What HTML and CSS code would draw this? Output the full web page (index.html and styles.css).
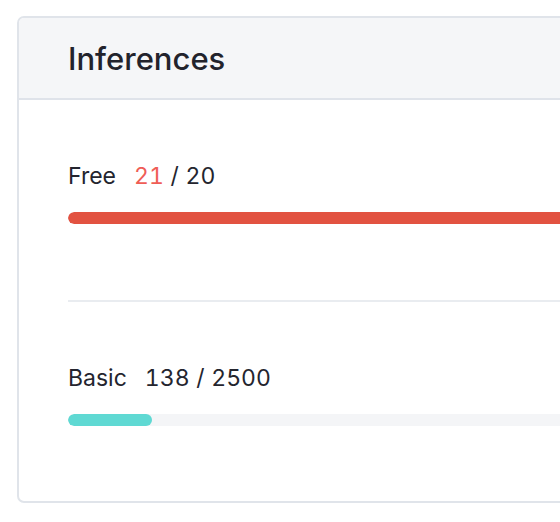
FILE: index.html
```html
<!DOCTYPE html>
<html lang="en">
<head>
<meta charset="utf-8">
<title>Inferences</title>
<link rel="stylesheet" href="styles.css">
</head>
<body>
<div class="card">
  <div class="card-header">
    <h2 class="card-title">Inferences</h2>
  </div>
  <div class="usage">
    <div class="usage-label">
      <span class="plan">Free</span>
      <span class="count"><span class="over">21</span> / 20</span>
    </div>
    <div class="track"><div class="fill fill-over" style="width: 100%"></div></div>
  </div>
  <div class="divider"></div>
  <div class="usage usage-last">
    <div class="usage-label">
      <span class="plan">Basic</span>
      <span class="count">138 / 2500</span>
    </div>
    <div class="track"><div class="fill fill-ok" style="width: 5.52%"></div></div>
  </div>
</div>
</body>
</html>
```

FILE: styles.css
```css
html, body {
  margin: 0;
  padding: 0;
  overflow: hidden;
  background: #ffffff;
}

body {
  font-family: Inter, "Noto Sans", sans-serif;
  color: #24252e;
  padding: 16px 0 0 17px;
}

.card {
  box-sizing: border-box;
  width: 1624px;
  border: 2px solid #e0e4ea;
  border-radius: 7px;
  background: #ffffff;
  overflow: hidden;
}

.card-header {
  height: 80px;
  display: flex;
  align-items: center;
  padding: 0 49px;
  background: #f5f6f8;
  border-bottom: 2px solid #dfe3ea;
}

.card-title {
  margin: 0;
  font-size: 31px;
  font-weight: 500;
  line-height: 1;
  color: #22232c;
}

.usage {
  padding: 60px 49px 76px;
}

.usage-last {
  padding-bottom: 75px;
}

.usage-label {
  display: flex;
  gap: 18px;
  font-size: 23px;
  line-height: 32px;
  font-feature-settings: "tnum" 1;
}

.count {
  word-spacing: 0.5px;
}

.over {
  color: #ef5d56;
}

.track {
  margin-top: 20px;
  height: 12px;
  border-radius: 6px;
  background: #f4f5f7;
  overflow: hidden;
}

.fill {
  height: 100%;
  border-radius: 6px;
}

.fill-over {
  background: #e25241;
}

.fill-ok {
  background: #5fd9d3;
}

.divider {
  height: 2px;
  margin: 0 49px;
  background: #e9ecf0;
}
```
